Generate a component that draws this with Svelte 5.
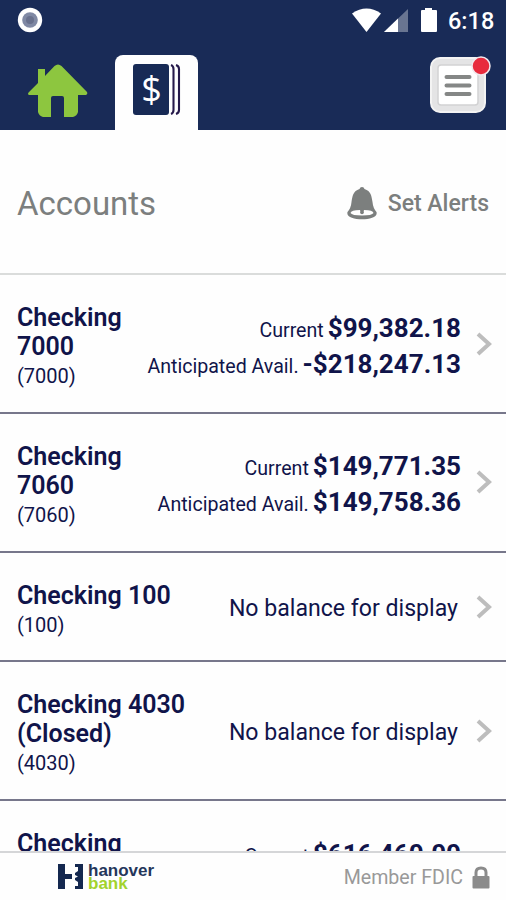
<script lang="ts">
	type Balance = { label: string; amount: string };

	type Account = {
		name: string[];
		number: string;
		balances: Balance[];
	};

	const accounts: Account[] = [
		{
			name: ['Checking', '7000'],
			number: '7000',
			balances: [
				{ label: 'Current', amount: '$99,382.18' },
				{ label: 'Anticipated Avail.', amount: '-$218,247.13' }
			]
		},
		{
			name: ['Checking', '7060'],
			number: '7060',
			balances: [
				{ label: 'Current', amount: '$149,771.35' },
				{ label: 'Anticipated Avail.', amount: '$149,758.36' }
			]
		},
		{ name: ['Checking 100'], number: '100', balances: [] },
		{ name: ['Checking 4030', '(Closed)'], number: '4030', balances: [] },
		{
			name: ['Checking', '6000'],
			number: '6000',
			balances: [
				{ label: 'Current', amount: '$616,460.00' },
				{ label: 'Anticipated Avail.', amount: '$616,460.00' }
			]
		}
	];
</script>

<div class="screen">
	<header class="header">
		<div class="status">
			<svg class="status__record" width="26" height="26" viewBox="0 0 26 26">
				<circle cx="13" cy="13" r="12.2" fill="#fff" />
				<circle cx="13" cy="13" r="7.8" fill="#8089a4" />
				<circle cx="13" cy="13" r="4" fill="#69718d" />
			</svg>
			<svg class="status__icons" width="90" height="26" viewBox="0 0 90 26" fill="#fff">
				<path d="M0 5.5Q14.500-4.500 29 5.500L14.500 24Z" />
				<path d="M56 1V24H32Z" opacity=".35" />
				<path d="M46 10.500V24H32Z" />
				<path d="M73 0h7v2h4q1 0 1 1v20q0 1-1 1H70q-1 0-1-1V3q0-1 1-1h3Z" />
			</svg>
			<span class="status__time">6:18</span>
		</div>

		<nav class="tabs">
			<a class="tabs__home" href="#home" aria-label="Home">
				<svg width="60" height="54" viewBox="0 0 60 54" fill="#8dc63f">
					<path d="M10 5h7v7L26.500 2Q30-1.200 33.500 2L59 28q1 2-1 3H50V48q-1 4-5 5H36V34q0-2-2-2H25q-2 0-2 2V53H15q-4-1-5-5V31H1q-2-1 0-3L10 19Z" />
				</svg>
			</a>
			<a class="tabs__accounts" href="#accounts" aria-label="Accounts">
				<svg width="48" height="52" viewBox="0 0 48 52">
					<rect x="0" y="0" width="36" height="51" rx="3" fill="#172a55" />
					<path d="M38 1q2.500 1 2.500 4V46q0 3-2.500 4M43 1q3 1 3 4V46q0 3-3 4" fill="none" stroke="#261a4b" stroke-width="2.100" />
					<text x="18.500" y="37.500" text-anchor="middle" fill="#fff">$</text>
				</svg>
			</a>
			<button class="menu" aria-label="Menu">
				<svg width="62" height="58" viewBox="0 0 62 58">
					<rect x="2" y="2" width="54" height="54" rx="9" fill="#e4e4e5" stroke="#f3f3f3" stroke-width="2" />
					<rect x="9" y="9" width="40" height="40" rx="3" fill="#fff" stroke="#d2d2d3" stroke-width="1.500" />
					<path d="M17.500 21h23M17.500 29.500h23M17.500 38h23" stroke="#858786" stroke-width="4" stroke-linecap="round" />
					<circle cx="52" cy="10" r="9" fill="#e82b3d" stroke="#f1e8ed" stroke-width="1.500" />
				</svg>
			</button>
		</nav>
	</header>

	<section class="heading">
		<h1>Accounts</h1>
		<a class="alerts" href="#alerts">
			<svg width="32" height="34" viewBox="0 0 32 34">
				<path d="M16 1q2 0 2.500 2C25 5 25.500 10 26.500 16q.5 6 4 10c3 9.500-32 9.500-29 0q3.500-4 4-10C6.500 10 7 5 13.500 3Q14 1 16 1Z" fill="#7c7f7e" />
				<path d="M4.500 27Q5 24 14 24L15 27.500H17L18 24Q27 24 27.500 27Q26 29.500 16 29.500T4.500 27Z" fill="#fff" />
				<circle cx="16" cy="26.500" r="1.800" fill="#7c7f7e" />
			</svg>
			<span>Set Alerts</span>
		</a>
	</section>

	<main class="accounts">
		{#each accounts as account (account.number)}
			<a class="account" href="#account-{account.number}">
				<div class="account__title">
					{#each account.name as line}
						<strong>{line}</strong>
					{/each}
					<span>({account.number})</span>
				</div>
				{#if account.balances.length}
					<div class="account__balances">
						{#each account.balances as balance}
							<div class="balance">
								<span>{balance.label}</span>
								<b>{balance.amount}</b>
							</div>
						{/each}
					</div>
				{:else}
					<span class="account__empty">No balance for display</span>
				{/if}
				<svg class="account__chevron" width="18" height="26" viewBox="0 0 18 26">
					<path d="M3 3L14 13L3 23" fill="none" stroke="#bdbdbd" stroke-width="4" />
				</svg>
			</a>
		{/each}
	</main>

	<footer class="footer">
		<div class="brand">
			<svg width="26" height="26" viewBox="0 0 26 26" fill="#14284f">
				<path d="M0 0H7V10H14V15H7V25H0Z" />
				<path d="M17 0H25V25H17V22H20V18L17 16V14L20 12.500L17 11V9L20 7V3H17Z" />
			</svg>
			<div class="brand__name">
				<span>hanover</span>
				<span class="brand__bank">bank</span>
			</div>
		</div>
		<div class="fdic">
			<span>Member FDIC</span>
			<svg width="18" height="23" viewBox="0 0 18 23">
				<path d="M4 11V6.500Q4 2 9 2t5 4.500V11" fill="none" stroke="#8b8b8b" stroke-width="3" />
				<rect x="0.500" y="10" width="17" height="12.500" rx="1" fill="#8b8b8b" />
			</svg>
		</div>
	</footer>
</div>

<style>
	:global(body) {
		margin: 0;
	}

	.screen {
		display: flex;
		flex-direction: column;
		width: 506px;
		height: 900px;
		overflow: hidden;
		background: #fefefe;
		color: #10144a;
		font-family: Roboto, sans-serif;
	}

	a {
		color: inherit;
		text-decoration: none;
	}

	svg {
		display: block;
		flex: none;
	}

	.header {
		flex: none;
		height: 130px;
		background: #192b57;
	}

	.status {
		display: flex;
		align-items: flex-start;
		box-sizing: border-box;
		height: 54px;
		padding: 7px 12px 0 17px;
	}

	.status__icons {
		margin: 1px 0 0 auto;
	}

	.status__time {
		width: 46px;
		margin-left: 6px;
		color: #fff;
		font-size: 23.5px;
		font-weight: 500;
		line-height: 28px;
		white-space: nowrap;
	}

	.tabs {
		display: flex;
		height: 76px;
		padding: 0 15px 0 28px;
	}

	.tabs__home {
		width: 87px;
		padding-top: 10px;
	}

	.tabs__accounts {
		box-sizing: border-box;
		width: 83px;
		margin-top: 1px;
		padding: 9px 0 0 18px;
		border-radius: 8px 8px 0 0;
		background: #fefefe;
	}

	.tabs__accounts text {
		font-family: 'Open Sans', sans-serif;
		font-size: 36px;
	}

	.menu {
		align-self: flex-start;
		margin: 2px 0 0 auto;
		padding: 0;
		border: 0;
		background: none;
	}

	.heading {
		display: flex;
		flex: none;
		align-items: center;
		justify-content: space-between;
		box-sizing: border-box;
		height: 145px;
		padding: 4px 17px 0 17px;
		border-bottom: 2px solid #dadcdb;
		color: #7c7f7e;
	}

	h1 {
		margin: 0;
		font-size: 33px;
		font-weight: 400;
	}

	.alerts {
		display: flex;
		align-items: center;
		gap: 10px;
		font-size: 23px;
		font-weight: 500;
	}

	.alerts svg {
		margin-top: -2px;
	}

	.accounts {
		flex: 1;
		min-height: 0;
		overflow: hidden;
	}

	.account {
		display: flex;
		align-items: center;
		box-sizing: border-box;
		padding: 28px 13px 20.800px 17px;
		border-bottom: 2px solid #77778b;
	}

	.account__title {
		display: flex;
		flex: none;
		flex-direction: column;
	}

	.account__title strong {
		font-size: 25px;
		font-weight: 600;
		line-height: 29px;
	}

	.account__title span {
		font-size: 20px;
		line-height: 30px;
	}

	.account__balances {
		display: flex;
		flex: 1;
		flex-direction: column;
		align-items: flex-end;
		margin-top: -3px;
		white-space: nowrap;
	}

	.balance {
		display: flex;
		align-items: baseline;
		gap: 4px;
		height: 36px;
		line-height: 36px;
	}

	.balance span {
		font-size: 19.600px;
	}

	.balance b {
		font-size: 26px;
		font-weight: 700;
	}

	.account__empty {
		flex: 1;
		margin: -3px 3px 0 0;
		font-size: 23.100px;
		text-align: right;
	}

	.account__chevron {
		margin: -7px 0 0 14px;
	}

	.footer {
		display: flex;
		flex: none;
		align-items: flex-start;
		justify-content: space-between;
		box-sizing: border-box;
		height: 49px;
		padding: 11px 16px 0 58px;
		border-top: 2px solid #d5d6d8;
		background: #fefefe;
	}

	.brand {
		display: flex;
		gap: 4px;
	}

	.brand__name {
		display: flex;
		flex-direction: column;
		color: #24365b;
		font-family: 'Liberation Sans', sans-serif;
		font-size: 17px;
		font-weight: 700;
		line-height: 13px;
	}

	.brand__bank {
		color: #a2d32d;
	}

	.fdic {
		display: flex;
		align-items: center;
		gap: 9px;
		color: #999;
		font-size: 19.600px;
		line-height: 27px;
	}
</style>
